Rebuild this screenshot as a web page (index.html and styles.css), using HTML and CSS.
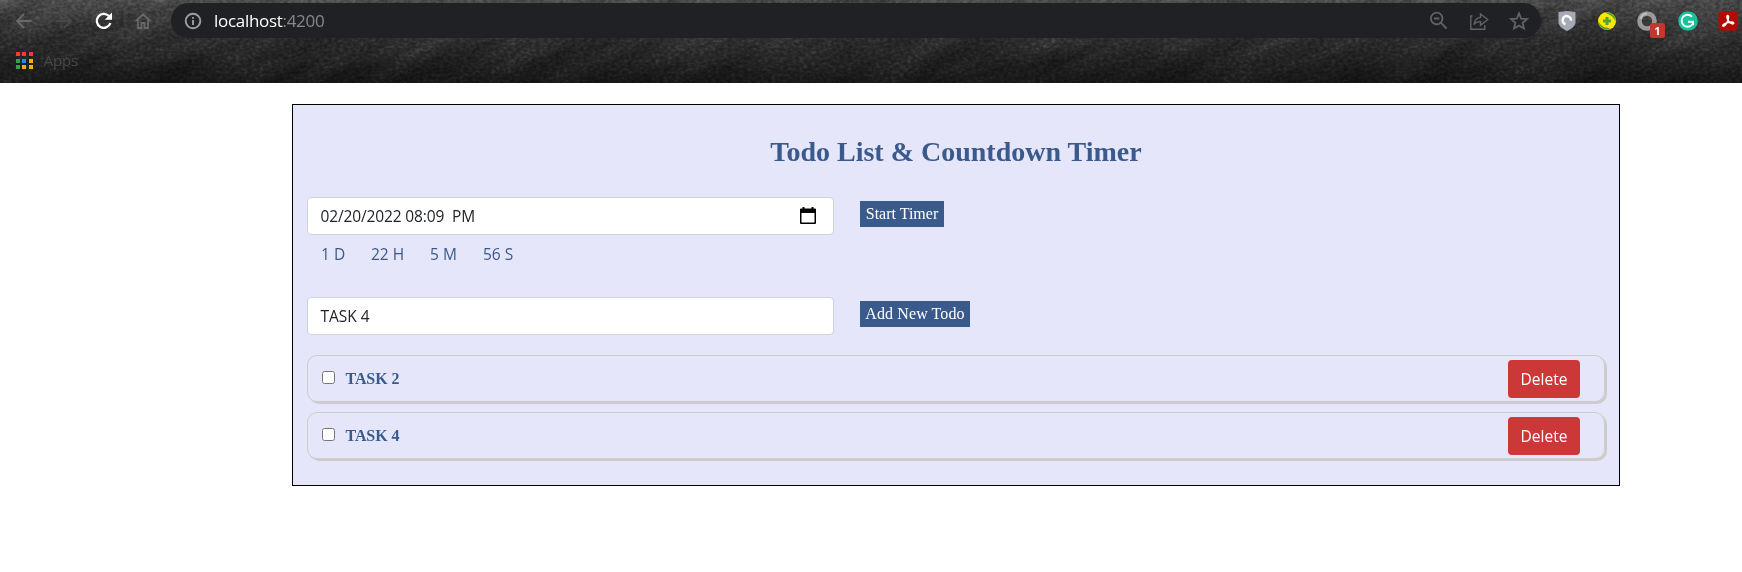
FILE: index.html
```html
<!DOCTYPE html>
<html lang="en">
<head>
<meta charset="utf-8">
<title>Todo List &amp; Countdown Timer</title>
<link rel="stylesheet" href="styles.css">
</head>
<body>
<header class="chrome">
  <svg class="texture" width="1742" height="83" aria-hidden="true">
    <filter id="grain" x="0" y="0" width="100%" height="100%" color-interpolation-filters="sRGB">
      <feTurbulence type="fractalNoise" baseFrequency="0.25 0.35" numOctaves="4" seed="8"/>
      <feColorMatrix values="1.6 0 0 0 -0.45  1.6 0 0 0 -0.45  1.6 0 0 0 -0.45  0 0 0 0 1"/>
    </filter>
    <filter id="folds" x="0" y="0" width="100%" height="100%" color-interpolation-filters="sRGB">
      <feTurbulence type="fractalNoise" baseFrequency="0.012 0.05" numOctaves="5" seed="4"/>
      <feColorMatrix values="1 0 0 0 -.1  1 0 0 0 -.1  1 0 0 0 -.1  0 0 0 0 1"/>
    </filter>
    <rect width="1742" height="83" filter="url(#grain)" class="grain"/>
    <g transform="rotate(-24 871 41)" class="folds"><rect x="-60" y="-420" width="1862" height="920" filter="url(#folds)"/></g>
  </svg>
  <div class="toolbar">
    <nav class="nav">
      <svg width="18" height="18" viewBox="0 0 18 18" class="dim"><path d="M16.5 9H2M9 2 2 9l7 7"/></svg>
      <svg width="18" height="18" viewBox="0 0 18 18" class="faint"><path d="M1.5 9H16M9 2l7 7-7 7"/></svg>
      <svg width="20" height="20" viewBox="0 0 20 20" class="reload"><path d="M16.4 12.2A7 7 0 1 1 15 5.1"/><path class="solid" d="M18 1.5v7.2h-7.2z"/></svg>
      <svg width="18" height="18" viewBox="0 0 18 18" class="dim"><path d="M1.5 9.2 9 2.3l7.500 6.900M4 7.500v8.500h3.500v-5h3v5H14V7.500"/></svg>
    </nav>
    <div class="omnibox">
      <svg width="18" height="18" viewBox="0 0 18 18" class="info"><circle cx="9" cy="9" r="7.300"/><path d="M9 8v5M9 5v1.800"/></svg>
      <span class="url">localhost<span class="port">:4200</span></span>
      <div class="actions">
        <svg width="20" height="20" viewBox="0 0 20 20"><circle cx="7.700" cy="7.500" r="5.800"/><path d="m11.800 11.600 5.700 6M5 7.500h5.400"/></svg>
        <svg width="20" height="20" viewBox="0 0 20 20" class="thin"><path d="M3.500 5H1.800v13.200h14V14M11.500 3l7.200 5.500-7.200 5.700v-3.600c-3 0-5 .6-6.500 3 .5-4 2.700-6.700 6.500-7.200z"/></svg>
        <svg width="20" height="20" viewBox="0 0 20 20"><path d="m10 2.300 2.200 5.300 5.800.5-4.400 3.800 1.400 5.600L10 14.600l-5 2.900 1.400-5.600L2 8.100l5.800-.5z"/></svg>
      </div>
    </div>
    <div class="extensions">
      <svg width="18" height="20" viewBox="0 0 18 20"><path d="M.5 1 9 0l8.500 1v10c0 4-4 7-8.500 9-4.500-2-8.500-5-8.500-9z" fill="#a6aab5"/><path d="M7.500 13.300A4.200 4.200 0 1 1 13 9.600" fill="none" stroke="#fff" stroke-width="2.500"/></svg>
      <svg width="20" height="20" viewBox="0 0 20 20"><circle cx="10" cy="10" r="9" fill="#ffe600"/><path d="M7 1.500a9 9 0 0 1 11.500 9l-1.800-3C14.500 4 11 3 7 1.500zM1.200 9.500c1.300 4 4.300 6.500 9.500 7.300l3 1.200a9 9 0 0 1-12.500-8.500z" fill="#55a136"/><path d="M10 6v8M6 10h8" stroke="#55a136" stroke-width="3"/></svg>
      <div class="badged">
        <svg width="20" height="20" viewBox="0 0 20 20"><circle cx="10" cy="10" r="7.500" fill="none" stroke="#999" stroke-width="4.600"/><path d="M3.500 8A7 7 0 0 1 10 2.500" fill="none" stroke="#bebebe" stroke-width="2"/></svg>
        <span class="badge">1</span>
      </div>
      <svg width="20" height="20" viewBox="0 0 20 20"><circle cx="10" cy="10" r="9.800" fill="#15c39a"/><path d="M14 5.600A6 6 0 1 0 14.600 13M10 10.800h5v3.500" fill="none" stroke="#fff" stroke-width="1.900"/></svg>
      <svg width="20" height="20" viewBox="0 0 20 20"><rect x=".5" y=".5" width="19" height="19" rx="3" fill="#b30b00"/><path d="M9.300 4.500c1.900-.4 1.300 3.500.1 6-1.100 2.500-3 5.300-4.400 4.600-1.200-1.100 2.200-3.200 5-3.700 2.600-.5 5.800-.6 5.700.9-.3 1.500-3.600-.2-5-2-1.500-1.800-2.400-5.300-1.400-5.800z" fill="none" stroke="#fff" stroke-width="1.500"/></svg>
    </div>
  </div>
  <div class="bookmarks">
    <div class="apps"><i class="r"></i><i class="r"></i><i class="r"></i><i class="g"></i><i class="b"></i><i class="y"></i><i class="g"></i><i class="y"></i><i class="y"></i></div>
    <span>Apps</span>
  </div>
</header>
<main class="panel">
  <h1 class="title">Todo List &amp; Countdown Timer</h1>
  <div class="row">
    <div class="field date"><span>02/20/2022 08:09&nbsp; PM</span>
      <svg width="16" height="18" viewBox="0 0 16 18"><path d="M2.500 0h2v1.500h7V0h2v1.500H15a1 1 0 0 1 1 1V16a1 1 0 0 1-1 1H1a1 1 0 0 1-1-1V2.500a1 1 0 0 1 1-1h1.500zM1.500 6v9.500h13V6z"/></svg>
    </div>
    <button class="action start">Start Timer</button>
  </div>
  <div class="timer"><span class="days">1 D</span><span class="hours">22 H</span><span class="minutes">5 M</span><span>56 S</span></div>
  <div class="row">
    <div class="field task-name"><span>TASK 4</span></div>
    <button class="action add">Add New Todo</button>
  </div>
  <ul class="todos">
    <li class="todo"><input type="checkbox" aria-label="TASK 2"><span class="name">TASK 2</span><button class="delete">Delete</button></li>
    <li class="todo"><input type="checkbox" aria-label="TASK 4"><span class="name">TASK 4</span><button class="delete">Delete</button></li>
  </ul>
</main>
</body>
</html>
```
FILE: styles.css
```css
* { box-sizing: border-box; }
body { margin: 0; background: #fff; font: 16px/24px "Open Sans", sans-serif; overflow: hidden; }
svg { display: block; flex: none; }
.chrome { position: relative; height: 83px; overflow: hidden; background: linear-gradient(#555, #323232 48%, #1c1c1c); }
.texture { position: absolute; inset: 0; mix-blend-mode: soft-light; }
.grain { opacity: .45; }
.folds { opacity: .35; }
.toolbar { position: relative; display: flex; height: 38px; padding-top: 3px; }
.nav { width: 171px; height: 35px; padding-left: 15px; display: flex; align-items: center; }
.nav svg { fill: none; stroke-width: 1.8; }
.nav .dim { stroke: #66686c; }
.nav .faint { stroke: #46484c; margin-left: 22px; }
.nav .reload { stroke: #fff; stroke-width: 2.3; margin-left: 21px; }
.nav .reload .solid { fill: #fff; stroke: none; }
.nav .reload + .dim { margin-left: 20px; }
.omnibox { width: 1370px; height: 35px; border-radius: 18px; background: #202124; display: flex; align-items: center; padding: 0 12px 0 13px; }
.info { fill: none; stroke: #9aa0a6; stroke-width: 1.9; }
.url { margin-left: 12px; color: #fff; font-size: 17px; letter-spacing: -.3px; }
.port { color: #85888c; }
.actions { margin-left: auto; display: flex; gap: 20px; }
.actions svg { fill: none; stroke: #606266; stroke-width: 1.8; }
.actions .thin { stroke-width: 1.4; }
.extensions { display: flex; align-items: center; gap: 20.5px; margin-left: 17px; height: 35px; }
.badged { position: relative; }
.badge { position: absolute; left: 13px; top: 12px; width: 15px; height: 15px; border-radius: 2px; background: #c5372c; color: #fff; font: bold 11px/15px "Open Sans", sans-serif; text-align: center; }
.bookmarks { position: relative; display: flex; align-items: center; height: 45px; padding: 0 0 0 16px; color: #45494c; font-size: 15px; letter-spacing: -.2px; }
.bookmarks span { margin-top: -2px; }
.apps { display: grid; grid-template-columns: repeat(3, 4px); gap: 2.4px; margin: 0 11px 0 0; }
.apps i { height: 4px; }
.r { background: #f93c32; }
.g { background: #31a350; }
.b { background: #258bf4; }
.y { background: #f9ad0c; }
.panel { width: 1328px; height: 382px; margin: 21px 0 0 292px; padding: 28px 14px 0; border: 1px solid #000; background: #e6e6fa; color: #3a5a8c; }
.title { margin: 0 0 26px; font: bold 28px/38px "Liberation Serif", serif; text-align: center; }
.row { display: flex; }
.field { width: 527px; height: 38px; border: 1px solid #ced4da; border-radius: 4px; background: #fff; color: #212529; display: flex; align-items: center; justify-content: space-between; padding: 0 17px 0 12.5px; }
.date { font-size: 15.5px; letter-spacing: -.13px; }
.action { height: 26px; margin: 4px 0 0 26px; padding: 0; border: 0; background: #3a5a8c; color: #fff; font: 16px/24px "Liberation Serif", serif; }
.start { width: 84px; }
.add { width: 110px; letter-spacing: .1px; }
.timer { height: 62px; padding: 7px 14px 0; display: flex; font-size: 15.5px; }
.days { width: 50px; }
.hours { width: 59px; }
.minutes { width: 53px; }
.task-name { font-size: 15.5px; letter-spacing: 0; }
.todos { list-style: none; margin: 20px 1px 0 0; padding: 0; display: flex; flex-direction: column; gap: 10px; }
.todo { width: 1298px; height: 47px; border: 1px solid #ccc; border-radius: 10px; box-shadow: 2px 2px #ccc; display: flex; align-items: center; padding: 0 24px 0 14px; }
.todo input { width: 13px; height: 13px; margin: -2px 10.5px 0 0; }
.name { font: bold 16px/24px "Liberation Serif", serif; letter-spacing: -.1px; }
.delete { margin-left: auto; width: 72px; height: 38px; padding: 0; border: 0; border-radius: 4px; background: #cb3837; color: #fff; font: 15.5px/24px "Open Sans", sans-serif; }
```
